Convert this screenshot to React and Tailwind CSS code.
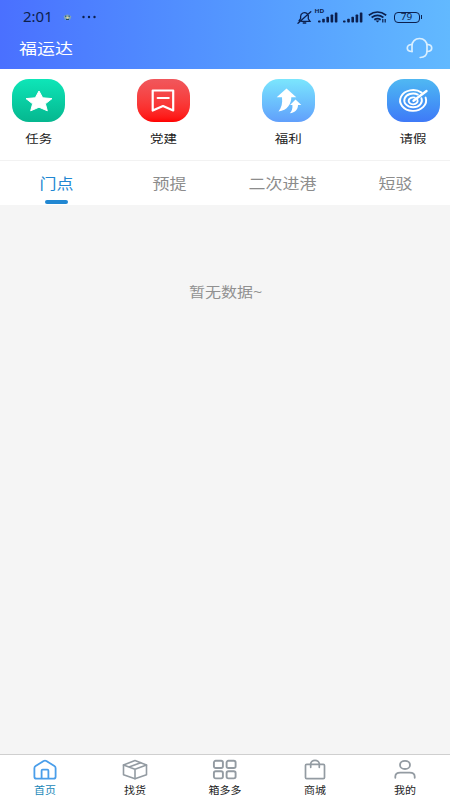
import React, { useState } from 'react'

const SHORTCUTS = [
  { key: 'task', label: '任务', bg: 'from-[#0ee6b8] to-[#05b78f]', Icon: StarIcon },
  { key: 'party', label: '党建', bg: 'from-[#f0575c] to-[#ff0000]', Icon: BookmarkIcon },
  { key: 'welfare', label: '福利', bg: 'from-[#7be6fd] to-[#619ffb]', Icon: ArrowsIcon },
  { key: 'leave', label: '请假', bg: 'from-[#50b8f2] to-[#3f79f7]', Icon: TargetIcon },
]

const TABS = ['门点', '预提', '二次进港', '短驳']

const NAV = [
  { key: 'home', label: '首页', Icon: HomeIcon },
  { key: 'find', label: '找货', Icon: BoxIcon },
  { key: 'boxes', label: '箱多多', Icon: GridIcon },
  { key: 'mall', label: '商城', Icon: BagIcon },
  { key: 'me', label: '我的', Icon: UserIcon },
]

function StarIcon() {
  return (
    <svg className="w-full h-full" viewBox="0 0 53 43" fill="#fff">
      <path d="M27 12l3.700 6.800 9.300.8-6.600 5.200 1.900 7-8.300-3.600-8.300 3.600 1.900-7-6.600-5.200 9.300-.8z" stroke="#fff" strokeWidth="1" strokeLinejoin="round" />
    </svg>
  )
}

function BookmarkIcon() {
  return (
    <svg className="w-full h-full" viewBox="0 0 53 43" fill="none" stroke="#fff" strokeWidth="2.200" strokeLinecap="round" strokeLinejoin="round">
      <path d="M15.700 11.500h20.500v20l-10.200-4.500-10.300 4.500z" />
      <path d="M20.700 19h11" />
    </svg>
  )
}

function ArrowsIcon() {
  return (
    <svg className="w-full h-full" viewBox="0 0 53 43" fill="#fff">
      <path d="M24.500 9.500l9.800 8.800h-5c0 6.500-3.600 13-12.800 14.200 3-3.500 4.200-8.500 3.500-14.200h-5.300z" />
      <path d="M33.500 20.500l5.800 5.500h-3.300c0 4-2.600 7.600-8.200 8.300 2-2 2.900-4.900 2.600-8.300h-2.400z" />
    </svg>
  )
}

function TargetIcon() {
  return (
    <svg className="w-full h-full" viewBox="0 0 53 43" fill="none" stroke="#fff" strokeWidth="1.900" strokeLinecap="round">
      <path d="M34.600 13.600a13 10.400 0 1 0 4 5" />
      <path d="M30.800 15.600a8.800 6.900 0 1 0 3.600 3.600" />
      <path d="M27.800 18.600a4.500 3.500 0 1 0 2.700 2.400" />
      <path d="M26.500 21.700l13-9.700" strokeWidth="2.400" />
    </svg>
  )
}

function HomeIcon() {
  return (
    <svg className="w-[26px] h-[22px]" viewBox="0 0 26 22" fill="none" stroke="currentColor" strokeWidth="1.800" strokeLinejoin="round">
      <path d="M2.400 17.700V9.200q0-1.300 1.200-2.100l8-5.100q1.400-.8 2.800 0l8 5.100q1.200.8 1.200 2.100v8.500q0 2-2.200 2H4.600q-2.200 0-2.200-2z" />
      <path d="M9.600 19.700v-8q0-1 1-1h4.800q1 0 1 1v8" />
    </svg>
  )
}

function BoxIcon() {
  return (
    <svg className="w-[26px] h-[22px]" viewBox="0 0 26 22" fill="none" stroke="currentColor" strokeWidth="1.600" strokeLinejoin="round" strokeLinecap="round">
      <path d="M13 1.500L24.500 6v9.800L13 19.800 1.500 15.800V6z" />
      <path d="M1.500 6L13 10.200 24.500 6M13 10.200v9.500M7 8l11.700-4.300" />
    </svg>
  )
}

function GridIcon() {
  return (
    <svg className="w-[26px] h-[22px]" viewBox="0 0 26 22" fill="none" stroke="currentColor" strokeWidth="1.900">
      <rect x="1.900" y="1.800" width="9" height="7.200" rx="1.800" />
      <rect x="14.600" y="1.800" width="9" height="7.200" rx="1.800" />
      <rect x="1.900" y="12.200" width="9" height="7.200" rx="1.800" />
      <rect x="14.600" y="12.200" width="9" height="7.200" rx="1.800" />
    </svg>
  )
}

function BagIcon() {
  return (
    <svg className="w-[26px] h-[22px]" viewBox="0 0 26 22" fill="none" stroke="currentColor" strokeWidth="1.700" strokeLinejoin="round" strokeLinecap="round">
      <rect x="3.500" y="5.300" width="19" height="14.300" rx="1.200" />
      <path d="M8.700 8.300V5.100a4.300 3.700 0 0 1 8.600 0v3.200" />
    </svg>
  )
}

function UserIcon() {
  return (
    <svg className="w-[26px] h-[22px]" viewBox="0 0 26 22" fill="none" stroke="currentColor" strokeWidth="1.800" strokeLinecap="round">
      <ellipse cx="13" cy="5.900" rx="5" ry="4.100" />
      <path d="M3.300 18.800v-1.300q0-3.900 5-3.900h9.400q5 0 5 3.900v1.300" />
    </svg>
  )
}

function BellOffIcon() {
  return (
    <svg className="w-[15px] h-[13px]" viewBox="0 0 15 13" fill="none" stroke="currentColor" strokeWidth="1.300" strokeLinecap="round">
      <path d="M10 2.500C7.500.6 3.600 2 3.600 5.500v2L2 9.800M4.500 10.300H13l-1.700-2.500V4.500M6.200 12h2.600M1 12.300L13.800.8" />
    </svg>
  )
}

function SignalIcon() {
  return (
    <svg className="w-5 h-[11px]" viewBox="0 0 20 11" fill="currentColor">
      <rect x="0" y="8.500" width="2.600" height="2" rx=".7" />
      <rect x="4.200" y="6.800" width="2.600" height="3.700" rx=".7" />
      <rect x="8.400" y="4.700" width="2.600" height="5.800" rx=".7" />
      <rect x="12.600" y="2.600" width="2.600" height="7.900" rx=".7" />
      <rect x="16.800" y=".4" width="2.600" height="10.100" rx=".7" />
    </svg>
  )
}

function WifiIcon() {
  return (
    <svg className="w-5 h-3" viewBox="0 0 20 12" fill="none" stroke="currentColor" strokeWidth="1.700">
      <path d="M.8 4.200q8.700-6.400 17.400 0M3.600 6.500q5.900-4.400 11.800 0M6.300 8.700q3.200-2.300 6.400 0" />
      <path d="M7.500 9.500h4l-2 2z" fill="currentColor" stroke="none" />
      <path d="M14.800 8v3.500M17.200 8v3.500" strokeWidth="1.200" />
    </svg>
  )
}

function HeadsetIcon() {
  return (
    <svg className="w-[27px] h-[22px]" viewBox="0 0 27 22" fill="none" stroke="#d9efff" strokeWidth="1.700" strokeLinecap="round">
      <path d="M6 14.500V8.600C6 4.500 9 1.500 13.500 1.500S21 4.500 21 8.600v6.200q-.3 5.400-6.800 5.700" />
      <path d="M6 7.500C3 7.500 1.300 8.800 1.300 11S3 14.500 6 14.500M21 7.500c3 0 4.700 1.300 4.700 3.500s-1.700 3.500-4.700 3.500" />
    </svg>
  )
}

function StatusBar() {
  return (
    <div className="h-[34px] flex items-center text-[#0c1f4d]">
      <span className="ml-[23px] w-[34px] text-[15px] leading-none font-['Noto_Sans'] scale-y-[0.9] whitespace-nowrap">2:01</span>
      <svg className="ml-1.5 w-[9px] h-2" viewBox="0 0 9 8">
        <path d="M.6 3.500q3.900-4 7.800 0l-1.200 3q-2.700 1.500-5.400 0z" fill="#7fa5b8" />
        <path d="M2.800 3.800h3.400L4.500 6z" fill="#e6d99a" />
        <path d="M2 3.200h1.300M5.500 3.200h1.300M3 6.500h3" stroke="#1f4561" />
      </svg>
      <svg className="ml-[10px] w-[14px] h-1" viewBox="0 0 14 4" fill="currentColor">
        <circle cx="1.500" cy="2" r="1.200" />
        <circle cx="7" cy="2" r="1.200" />
        <circle cx="12.500" cy="2" r="1.200" />
      </svg>
      <div className="ml-auto mr-[28px] flex items-center">
        <BellOffIcon />
        <div className="relative ml-[6px]">
          <SignalIcon />
          <span className="absolute -left-[3px] -top-1 text-[6.500px] leading-none font-bold font-['Noto_Sans'] scale-y-[0.85]">HD</span>
        </div>
        <div className="ml-[5px]"><SignalIcon /></div>
        <div className="ml-[5px]"><WifiIcon /></div>
        <div className="ml-[6px] flex items-center">
          <span className="w-[26px] h-[11px] rounded-[4px] border border-current flex items-center justify-center text-[10px] leading-none font-['Noto_Sans']"><span className="scale-y-[0.85]">79</span></span>
          <span className="ml-px w-[1.5px] h-1 bg-current" />
        </div>
      </div>
    </div>
  )
}

export default function App() {
  const [tab, setTab] = useState('门点')
  const [page, setPage] = useState('home')

  return (
    <div className="h-screen w-full flex flex-col overflow-hidden bg-[#f5f5f5] font-['Noto_Sans','Noto_Sans_CJK_SC',sans-serif]">
      {/* Header */}
      <header className="h-[69px] shrink-0 bg-linear-to-r from-[#4a70ff] to-[#62b9ff]">
        <StatusBar />
        <div className="h-[28px] flex items-center justify-between pl-[19px] pr-[17px]">
          <h1 className="text-[18px] leading-none text-white scale-y-[0.84]">福运达</h1>
          <HeadsetIcon />
        </div>
      </header>

      {/* Shortcuts */}
      <section className="h-[92px] shrink-0 flex justify-between bg-white border-b border-[#f2f2f2] pt-[10px] pl-[12.300px] pr-[10.500px]">
        {SHORTCUTS.map(({ key, label, bg, Icon }) => (
          <button key={key} className="w-[53px] flex flex-col items-center">
            <span className={`w-full h-[43px] rounded-[17px] bg-linear-to-b ${bg}`}>
              <Icon />
            </span>
            <span className="mt-[10px] text-[13.500px] leading-[14px] text-[#222] scale-y-[0.84]">{label}</span>
          </button>
        ))}
      </section>

      {/* Tabs */}
      <div className="h-11 shrink-0 grid grid-cols-4 bg-white -mr-0.5">
        {TABS.map(t => (
          <button key={t} onClick={() => setTab(t)} className={`flex flex-col items-center ${tab === t ? 'text-[#2187d2]' : 'text-[#8c8c8c]'}`}>
            <span className="mt-[14px] text-[17px] leading-[18px] scale-y-[0.84]">{t}</span>
            {tab === t && <span className="mt-[7px] w-[23px] h-[3.500px] rounded-full bg-[#2187d2]" />}
          </button>
        ))}
      </div>

      <main className="flex-1 pt-[79px] pl-px text-center">
        <p className="text-[16px] leading-4 text-[#909090] scale-y-[0.84]">暂无数据~</p>
      </main>

      {/* Bottom navigation */}
      <nav className="h-[46px] shrink-0 grid grid-cols-5 bg-white border-t border-[#cfcfcf]">
        {NAV.map(({ key, label, Icon }) => (
          <button key={key} onClick={() => setPage(key)} className="flex flex-col items-center pt-1">
            <span className={page === key ? 'text-[#4a9eea]' : 'text-[#939ba2]'}><Icon /></span>
            <span className={`mt-[3px] text-[11px] leading-3 scale-y-[0.9] ${page === key ? 'text-[#2187b8]' : 'text-[#222]'}`}>{label}</span>
          </button>
        ))}
      </nav>
    </div>
  )
}
